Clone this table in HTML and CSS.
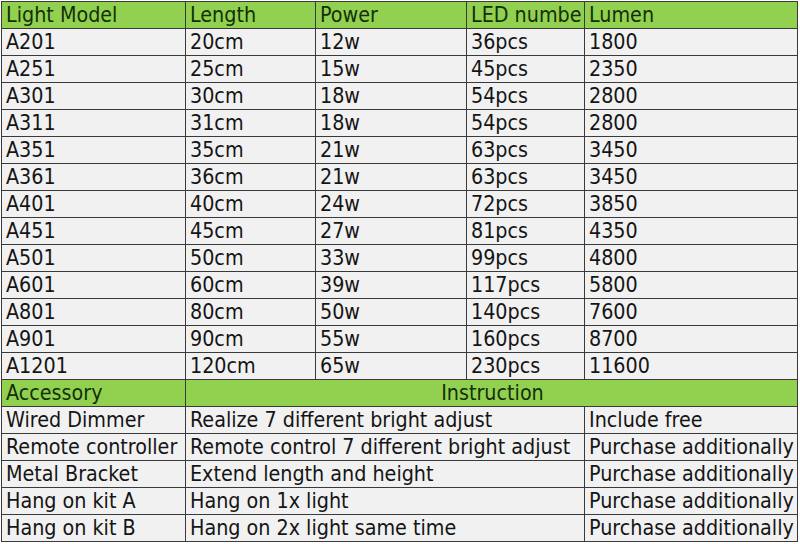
FILE: index.html
```html
<!DOCTYPE html>
<html>
<head>
<meta charset="utf-8">
<link rel="stylesheet" href="styles.css">
</head>
<body>
<table class="spec">
  <colgroup>
    <col class="c1"><col class="c2"><col class="c3"><col class="c4"><col class="c5">
  </colgroup>
  <tr class="head"><td>Light Model</td><td>Length</td><td>Power</td><td>LED numbe</td><td>Lumen</td></tr>
  <tr><td>A201</td><td>20cm</td><td>12w</td><td>36pcs</td><td>1800</td></tr>
  <tr><td>A251</td><td>25cm</td><td>15w</td><td>45pcs</td><td>2350</td></tr>
  <tr><td>A301</td><td>30cm</td><td>18w</td><td>54pcs</td><td>2800</td></tr>
  <tr><td>A311</td><td>31cm</td><td>18w</td><td>54pcs</td><td>2800</td></tr>
  <tr><td>A351</td><td>35cm</td><td>21w</td><td>63pcs</td><td>3450</td></tr>
  <tr><td>A361</td><td>36cm</td><td>21w</td><td>63pcs</td><td>3450</td></tr>
  <tr><td>A401</td><td>40cm</td><td>24w</td><td>72pcs</td><td>3850</td></tr>
  <tr><td>A451</td><td>45cm</td><td>27w</td><td>81pcs</td><td>4350</td></tr>
  <tr><td>A501</td><td>50cm</td><td>33w</td><td>99pcs</td><td>4800</td></tr>
  <tr><td>A601</td><td>60cm</td><td>39w</td><td>117pcs</td><td>5800</td></tr>
  <tr><td>A801</td><td>80cm</td><td>50w</td><td>140pcs</td><td>7600</td></tr>
  <tr><td>A901</td><td>90cm</td><td>55w</td><td>160pcs</td><td>8700</td></tr>
  <tr><td>A1201</td><td>120cm</td><td>65w</td><td>230pcs</td><td>11600</td></tr>
  <tr class="head"><td>Accessory</td><td colspan="4" class="center">Instruction</td></tr>
  <tr><td>Wired Dimmer</td><td colspan="3">Realize 7 different bright adjust</td><td>Include free</td></tr>
  <tr><td>Remote controller</td><td colspan="3">Remote control 7 different bright adjust</td><td>Purchase additionally</td></tr>
  <tr><td>Metal Bracket</td><td colspan="3">Extend length and height</td><td>Purchase additionally</td></tr>
  <tr><td>Hang on kit A</td><td colspan="3">Hang on 1x light</td><td>Purchase additionally</td></tr>
  <tr><td>Hang on kit B</td><td colspan="3">Hang on 2x light same time</td><td>Purchase additionally</td></tr>
</table>
</body>
</html>
```

FILE: styles.css
```css
html, body {
  margin: 0;
  padding: 0;
  background: #ffffff;
}

.spec {
  margin: 1px 0 0 1px;
  border-collapse: collapse;
  table-layout: fixed;
  width: 797px;
  font-family: "DejaVu Sans Condensed", "DejaVu Sans", sans-serif;
  font-stretch: condensed;
  font-size: 21.3px;
  color: #151515;
}

.c1 { width: 184px; }
.c2 { width: 130px; }
.c3 { width: 151px; }
.c4 { width: 118px; }
.c5 { width: 213px; }

.spec td {
  height: 26px;
  padding: 0 2px 0 4px;
  border: 1.5px solid #3a3a3a;
  background: #f1f1f1;
  white-space: nowrap;
  overflow: hidden;
  line-height: 26px;
  vertical-align: bottom;
}

.spec tr.head td {
  background: #92d050;
  color: #13300a;
}

.spec td.center {
  text-align: center;
}
```
